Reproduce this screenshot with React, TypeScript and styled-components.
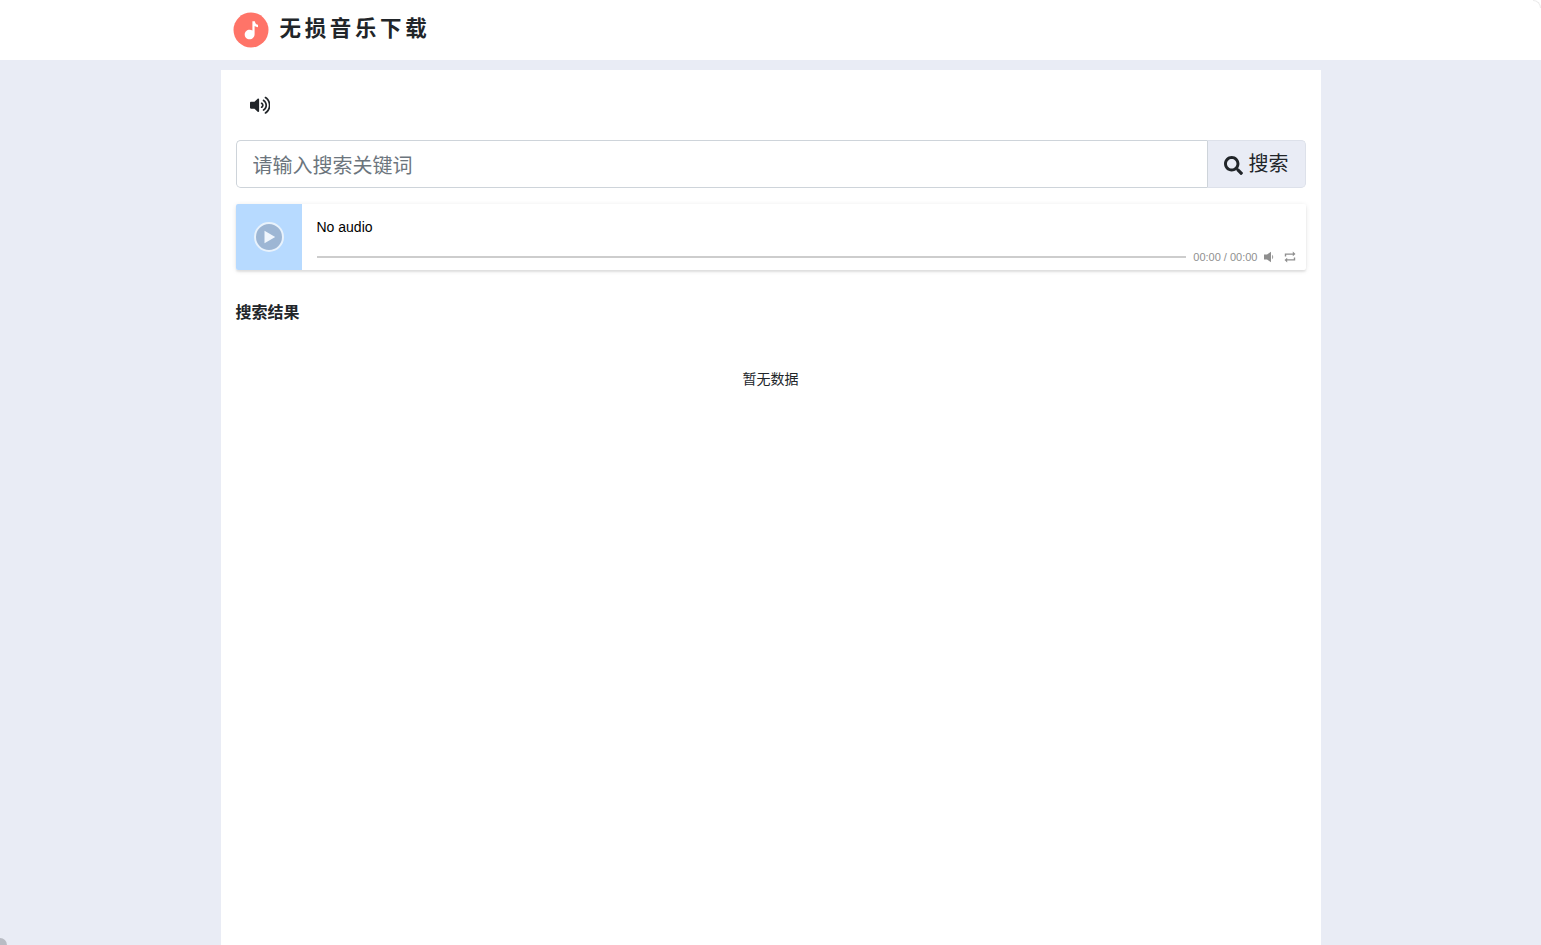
import React from "react"
import styled, { createGlobalStyle } from "styled-components"
import { FaSearch, FaVolumeUp } from "react-icons/fa"

const CJK = `"Liberation Sans", "Noto Sans CJK SC", sans-serif`

const GlobalStyle = createGlobalStyle`
  html, body {
    margin: 0;
    height: 100%;
    overflow: hidden;
    background: #e9ecf5;
    font-family: ${CJK};
    color: #212529;
  }
  * { box-sizing: border-box; }
`

const Header = styled.header`
  height: 60px;
  background: #fff;
`
const Brand = styled.div`
  width: 1100px;
  margin: 0 auto;
  padding-left: 12px;
  height: 60px;
  display: flex;
  align-items: center;
  gap: 11px;
`
const BrandName = styled.span`
  padding-bottom: 8px;
  font-size: 21.5px;
  font-weight: 700;
  letter-spacing: 3.65px;
  color: #212529;
`
const Main = styled.main`
  width: 1100px;
  min-height: 875px;
  margin: 10px auto 0;
  padding: 0 15px;
  background: #fff;
`
const SoundRow = styled.div`
  height: 70px;
  padding-left: 14px;
  display: flex;
  align-items: center;
  font-size: 20.5px;
`
const SearchBar = styled.form`
  display: flex;
  height: 48px;
  margin: 0;
`
const SearchInput = styled.input`
  flex: 1;
  min-width: 0;
  padding: 4px 16px 0;
  border: 1px solid #ced4da;
  border-right: 0;
  border-radius: 4.8px 0 0 4.8px;
  font-family: ${CJK};
  font-size: 20px;
  color: #495057;
  outline: none;
  &::placeholder { color: #6c757d; opacity: 1; }
`
const SearchButton = styled.button`
  width: 99px;
  display: flex;
  align-items: center;
  justify-content: center;
  gap: 6px;
  padding: 0;
  background: #e9ecf5;
  border: 1px solid #dde1ea;
  border-left-color: #ced4da;
  border-radius: 0 4.8px 4.8px 0;
  font-family: ${CJK};
  font-size: 20px;
  line-height: 24px;
  color: #212529;
  svg { margin-top: 2px; }
`
const Player = styled.div`
  display: flex;
  height: 66px;
  margin-top: 16px;
  border-radius: 2px;
  background: #fff;
  box-shadow: 0 2px 2px 0 rgba(0, 0, 0, 0.07), 0 1px 5px 0 rgba(0, 0, 0, 0.1);
`
const Cover = styled.div`
  width: 66px;
  flex: none;
  display: flex;
  align-items: center;
  justify-content: center;
  background: #b7daff;
  border-radius: 2px 0 0 2px;
`
const PlayerBody = styled.div`
  flex: 1;
  min-width: 0;
  padding: 14px 10px 0 15px;
`
const TrackTitle = styled.div`
  font-size: 14px;
  line-height: 18px;
  color: #000;
`
const Controls = styled.div`
  display: flex;
  align-items: center;
  height: 16px;
  margin-top: 13px;
`
const ProgressBar = styled.div`
  flex: 1;
  height: 2px;
  background: #cdcdcd;
`
const Time = styled.span`
  margin-left: 7px;
  font-size: 11px;
  color: #909090;
  white-space: nowrap;
`
const ControlIcon = styled.svg<{ $gap: number }>`
  flex: none;
  margin-left: ${(p) => p.$gap}px;
  fill: #8f8f8f;
`
const SectionTitle = styled.h2`
  margin: 33px 0 0;
  font-size: 16px;
  line-height: 19px;
  font-weight: 700;
  color: #212529;
`
const EmptyText = styled.div`
  margin-top: 47px;
  text-align: center;
  font-size: 14px;
  line-height: 20px;
  color: #212529;
`
const ScrollStub = styled.div`
  position: fixed;
  left: -7px;
  bottom: -7px;
  width: 14px;
  height: 14px;
  border-radius: 50%;
  background: #b9bcc4;
`
const CornerArc = styled.div`
  position: fixed;
  top: 0;
  right: 0;
  width: 8px;
  height: 8px;
  border-top: 1px solid #ececec;
  border-right: 1px solid #ececec;
  border-top-right-radius: 8px;
`

const LogoIcon = () => (
  <svg width="36" height="36" viewBox="0 0 36 36">
    <circle cx="18" cy="18" r="17.5" fill="#ff7468" />
    <path
      d="M19.4 9.2h2.4c.3 2 1.4 3.2 3.2 3.6v2.5c-1.4-.1-2.5-.5-3.4-1.2v8.2c0 2.9-2.2 5-5 5s-4.9-2.1-4.9-4.8 2.2-4.8 4.9-4.8c1 0 2 .3 2.8.8z"
      fill="#fff"
    />
  </svg>
)

const PlayIcon = () => (
  <svg width="30" height="30" viewBox="0 0 30 30">
    <circle cx="15" cy="15" r="14" fill="#9db6d4" stroke="#e8f2fc" strokeWidth="2" />
    <path d="M10.5 8.8 21.2 15 10.5 21.2z" fill="#f0f6fd" />
  </svg>
)

const VolumeIcon = () => (
  <ControlIcon $gap={6} width="12" height="12" viewBox="0 0 12 12">
    <path d="M0 3.6h3L7 .8v10.4L3 8.4H0z" />
    <path d="M8.2 3.8c1.3 1 1.3 3.4 0 4.4z" />
  </ControlIcon>
)

const LoopIcon = () => (
  <ControlIcon $gap={8} width="12" height="12" viewBox="0 0 12 12">
    <path d="M.8 5.4V2.4h8V.6l2.7 2.5-2.7 2.1V3.8H2.2v1.6zM11.2 6.6v3h-8v1.8L.5 8.9l2.7-2.1v1.4h6.6V6.6z" />
  </ControlIcon>
)

export default function App() {
  return (
    <>
      <GlobalStyle />
      <Header>
        <Brand>
          <LogoIcon />
          <BrandName>无损音乐下载</BrandName>
        </Brand>
      </Header>
      <Main>
        <SoundRow>
          <FaVolumeUp />
        </SoundRow>
        <SearchBar>
          <SearchInput placeholder="请输入搜索关键词" />
          <SearchButton type="button">
            <FaSearch size={19} />
            <span>搜索</span>
          </SearchButton>
        </SearchBar>
        <Player>
          <Cover>
            <PlayIcon />
          </Cover>
          <PlayerBody>
            <TrackTitle>No audio</TrackTitle>
            <Controls>
              <ProgressBar />
              <Time>00:00 / 00:00</Time>
              <VolumeIcon />
              <LoopIcon />
            </Controls>
          </PlayerBody>
        </Player>
        <SectionTitle>搜索结果</SectionTitle>
        <EmptyText>暂无数据</EmptyText>
      </Main>
      <ScrollStub />
      <CornerArc />
    </>
  )
}
